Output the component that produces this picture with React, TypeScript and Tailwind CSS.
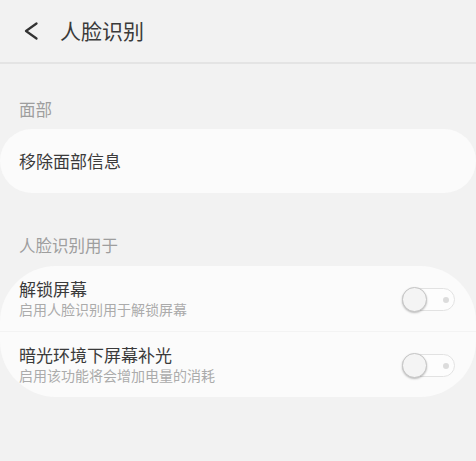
export default function App() {
  const rows = [
    { title: "解锁屏幕", desc: "启用人脸识别用于解锁屏幕" },
    { title: "暗光环境下屏幕补光", desc: "启用该功能将会增加电量的消耗" },
  ];

  return (
    <div
      className="min-h-screen bg-[#f2f2f2] text-[#3a3a3a]"
      style={{ fontFamily: '"Noto Sans CJK SC", "Noto Sans", sans-serif' }}
    >
      {/* HEADER */}
      <div className="h-[64px] flex items-center border-b-2 border-[#e4e4e4]">
        <svg
          className="ml-[24px] mb-[1px]"
          width="15"
          height="18"
          viewBox="0 0 15 18"
          fill="none"
          stroke="#333"
          strokeWidth="2.2"
          strokeLinecap="round"
          strokeLinejoin="round"
        >
          <path d="M12.5 1.5 L2 9 L12.5 16.5" />
        </svg>
        <h1 className="ml-[21px] mb-[2px] text-[21px] leading-[28px] text-[#3a3a3a]">人脸识别</h1>
      </div>

      {/* FACE */}
      <div className="pt-[33px] pb-[8px] px-[19px] text-[16.5px] leading-[24px] text-[#9e9e9e]">
        面部
      </div>
      <div className="h-[64px] bg-[#fbfbfb] rounded-[56px] flex items-center px-[19px]">
        <span className="text-[17px] leading-[24px] text-[#3a3a3a]">移除面部信息</span>
      </div>

      {/* USAGE */}
      <div className="pt-[40px] pb-[9px] px-[19px] text-[16.5px] leading-[24px] text-[#9e9e9e]">
        人脸识别用于
      </div>
      <div className="bg-[#fbfbfb] rounded-[56px] overflow-hidden">
        {rows.map((r, i) => (
          <div key={r.title}>
            {i > 0 && <div className="h-px bg-[#f3f3f3]" />}
            <div className="h-[65px] flex items-center justify-between pl-[19px] pr-[21px]">
              <div className="flex flex-col">
                <span className="text-[17px] leading-[20px] text-[#3a3a3a]">{r.title}</span>
                <span className="text-[14px] leading-[20px] text-[#ababab]">{r.desc}</span>
              </div>
              <div className="relative w-[53px] h-[25px] mt-[2px]">
                <div className="absolute inset-y-[1px] left-0 right-0 rounded-full border border-[#e2e2e2] bg-[#fdfdfd]" />
                <div className="absolute right-[6px] top-1/2 -translate-y-1/2 w-[6px] h-[6px] rounded-full bg-[#dcdcdc]" />
                <div className="absolute left-0 top-0 w-[25px] h-[25px] rounded-full border border-[#c4c4c4] bg-[#f4f4f4] shadow-[0_1px_2px_rgba(0,0,0,0.25)]" />
              </div>
            </div>
          </div>
        ))}
      </div>
    </div>
  );
}
